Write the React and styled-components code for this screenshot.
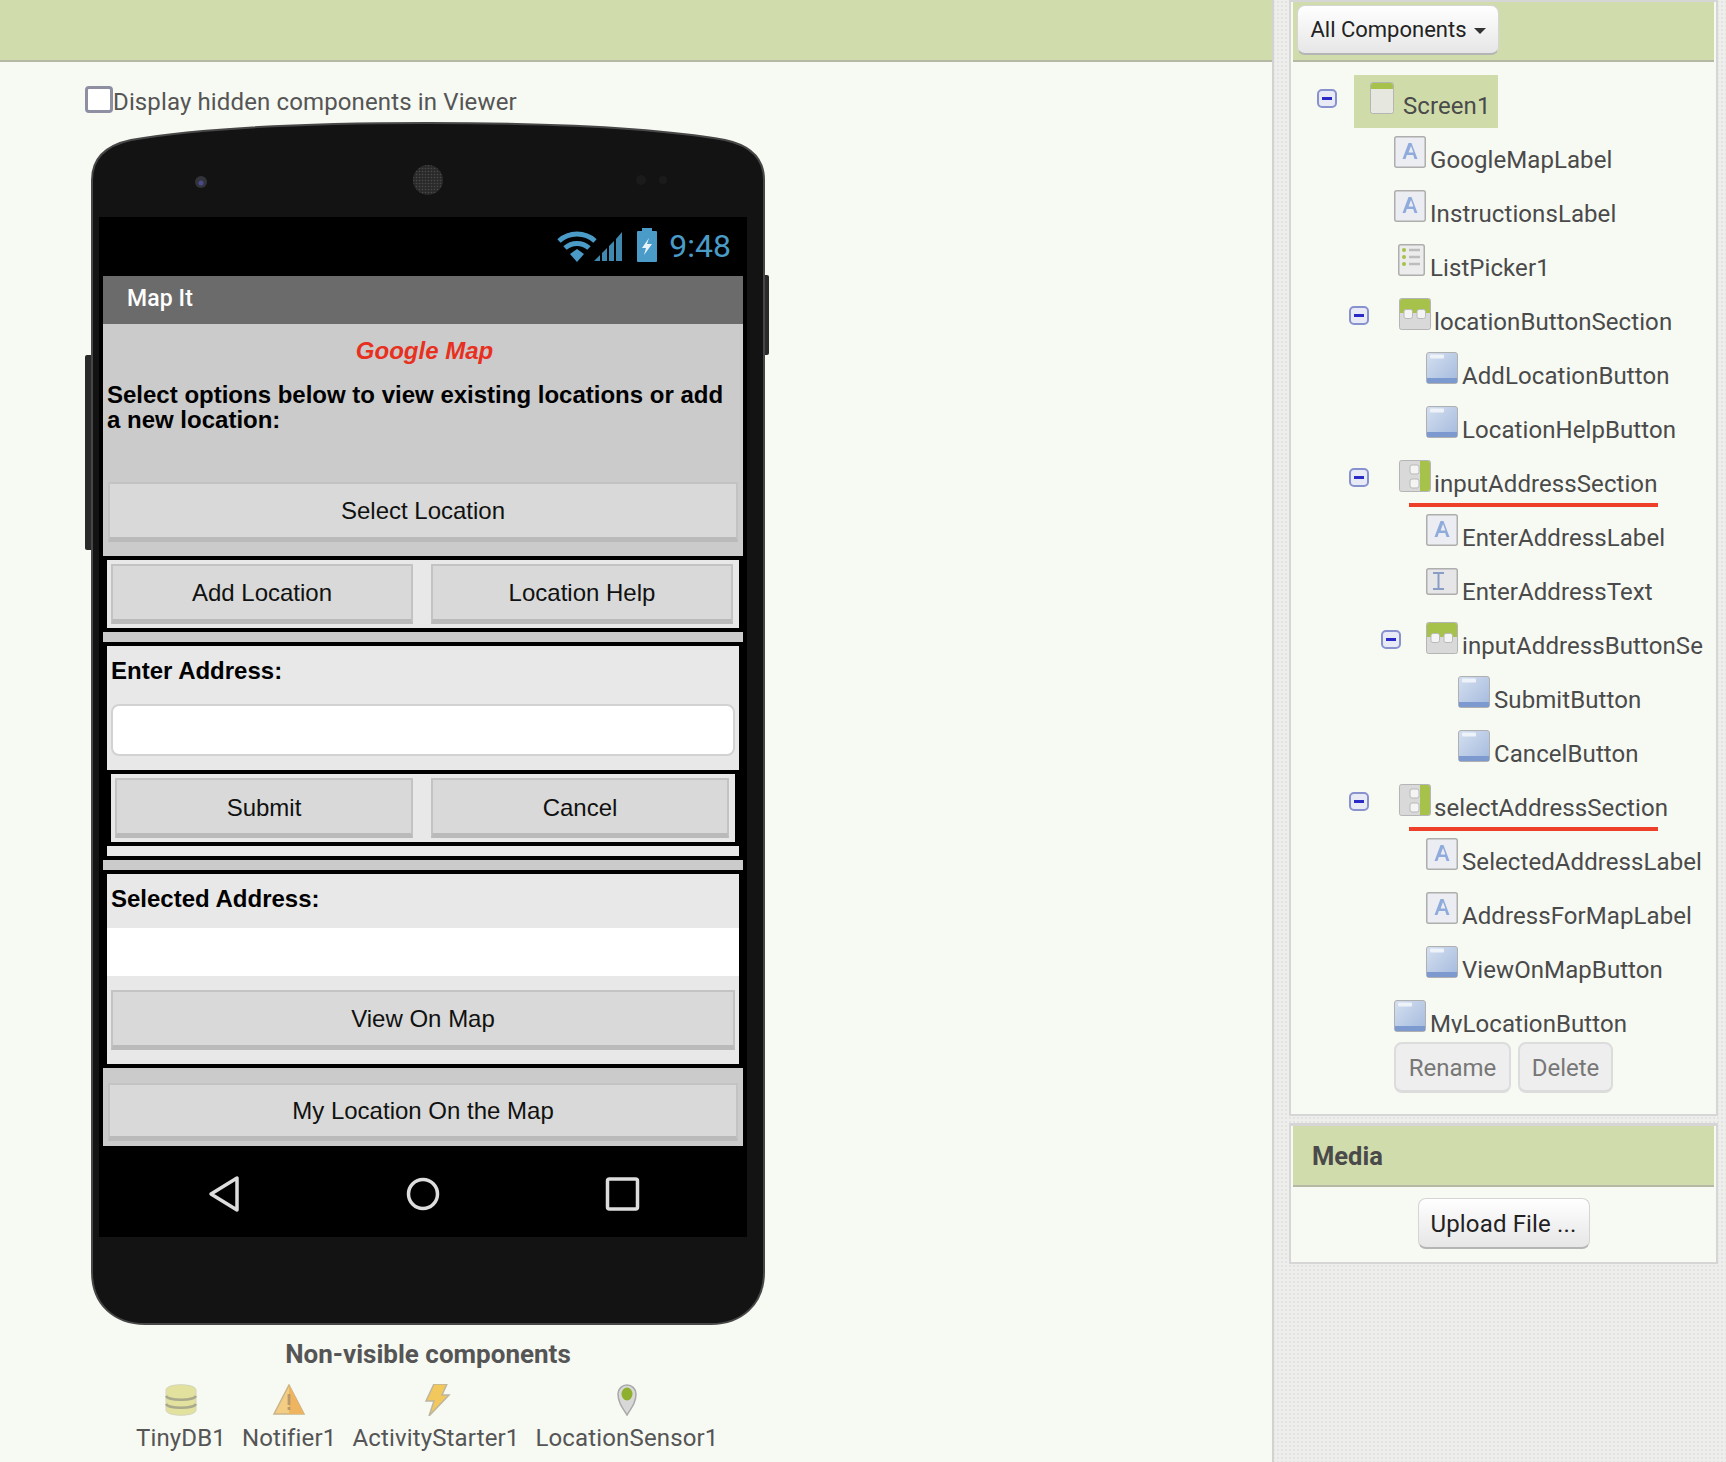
import React from "react";
import styled, { createGlobalStyle } from "styled-components";

const GlobalStyle = createGlobalStyle`
  html, body {
    margin: 0;
    padding: 0;
  }
  body {
    font-family: Roboto, "Liberation Sans", sans-serif;
    background-color: #eeeeed;
    background-image: radial-gradient(#e3e3e2 1px, transparent 1px);
    background-size: 4px 4px;
  }
`;

const PHONE_FONT = `"Liberation Sans", Arial, sans-serif`;

const Page = styled.div`
  display: flex;
  width: 1726px;
  height: 1462px;
  overflow: hidden;
`;

const Viewer = styled.div`
  width: 1272px;
  flex: none;
  background: #f7f9f3;
`;

const GreenBar = styled.div`
  height: 60px;
  background: #d1dcac;
  border-bottom: 2px solid #b4b8a4;
`;

const ViewerBody = styled.div`
  padding: 24px 0 0 85px;
`;

const HiddenToggle = styled.label`
  display: flex;
  align-items: flex-start;
  height: 27px;
  font-size: 24px;
  line-height: 27px;
  letter-spacing: 0.13px;
  color: #555;
`;

const HiddenText = styled.span`
  margin-top: 3px;
`;

const CheckBox = styled.span`
  box-sizing: border-box;
  width: 28px;
  height: 27px;
  background: #fff;
  border: 3px solid #8e8fa3;
  border-radius: 4px;
`;

const Phone = styled.div`
  position: relative;
  box-sizing: border-box;
  width: 674px;
  height: 1201px;
  margin: 9px 0 0 6px;
  padding: 95px 8px 0 10px;
`;

const PhoneShell = styled.svg`
  position: absolute;
  left: -6px;
  top: 0;
  width: 686px;
  height: 1203px;
`;

const Screen = styled.div`
  position: relative;
  width: 648px;
  height: 1020px;
  margin-left: -2px;
  background: #000;
  display: flex;
  flex-direction: column;
  font-family: ${PHONE_FONT};
`;

const StatusBar = styled.div`
  height: 59px;
  flex: none;
  position: relative;
`;

const StatusIcons = styled.svg`
  position: absolute;
  left: 458px;
  top: 11px;
  width: 102px;
  height: 36px;
`;

const Clock = styled.span`
  position: absolute;
  right: 16px;
  top: 10px;
  font-family: Roboto, sans-serif;
  font-weight: 400;
  font-size: 32px;
  line-height: 38px;
  color: #4a9bc7;
`;

const AppArea = styled.div`
  display: flex;
  flex-direction: column;
  gap: 4px;
  margin: 0 4px;
`;

const AppBar = styled.div`
  height: 48px;
  margin-bottom: -4px;
  background: #6b6b6b;
  color: #fff;
  font-family: Roboto, sans-serif;
  font-weight: 500;
  font-size: 23px;
  line-height: 46px;
  letter-spacing: 0.1px;
  padding-left: 24px;
`;

const Intro = styled.div`
  height: 232px;
  box-sizing: border-box;
  background: #cbcbcb;
  padding: 13px 5px 0;
`;

const AppTitle = styled.div`
  text-align: center;
  font-weight: 700;
  font-style: italic;
  font-size: 24px;
  line-height: 28px;
  padding-left: 3px;
  color: #e8301f;
`;

const Instructions = styled.p`
  margin: 17px 0 50px -1px;
  font-weight: 700;
  font-size: 24px;
  line-height: 25px;
  color: #000;
`;

const AppButton = styled.div`
  box-sizing: border-box;
  flex: ${(p) => (p.$grow ? "1" : "none")};
  height: ${(p) => p.$height || 60}px;
  display: flex;
  align-items: center;
  justify-content: center;
  background: #d8d9d8;
  border: 2px solid #c3c3c3;
  border-bottom: 5px solid #bababa;
  color: #111;
  font-size: 24px;
  padding-top: ${(p) => (p.$lift ? 0 : 2)}px;
`;

const SplitRow = styled.div`
  display: flex;
  gap: 18px;
  height: 68px;
  box-sizing: border-box;
  margin: 0 ${(p) => p.$inset}px;
  padding: 4px ${(p) => p.$pad}px 4px 4px;
  background: #e8e8e8;
`;

const Strip = styled.div`
  height: 10px;
  margin: 0 ${(p) => p.$inset || 0}px;
  background: ${(p) => p.$color};
`;

const Panel = styled.div`
  margin: 0 4px;
  background: #e8e8e8;
  display: flex;
  flex-direction: column;
`;

const FieldLabel = styled.div`
  font-weight: 700;
  font-size: 24px;
  line-height: 28px;
  color: #000;
  padding: ${(p) => p.$top}px 0 0 4px;
  height: ${(p) => p.$height}px;
  box-sizing: border-box;
`;

const AddressInput = styled.div`
  box-sizing: border-box;
  height: 52px;
  margin: 0 4px 14px 4px;
  background: #fff;
  border: 2px solid #d2d2d2;
  border-radius: 8px;
`;

const AddressValue = styled.div`
  height: 48px;
  background: #fff;
`;

const PanelButtonWrap = styled.div`
  padding: 14px 4px;
  display: flex;
  flex-direction: column;
`;

const LastSection = styled.div`
  height: 78px;
  box-sizing: border-box;
  background: #cbcbcb;
  padding: 15px 5px 0;
`;

const NavBar = styled.div`
  height: 91px;
  display: flex;
  align-items: center;
  justify-content: center;
  padding-top: 5px;
  box-sizing: border-box;
`;

const NavIcons = styled.svg`
  width: 648px;
  height: 48px;
`;

const NonVisible = styled.div`
  width: 674px;
  margin-left: 6px;
`;

const NonVisibleTitle = styled.div`
  margin-top: 15px;
  text-align: center;
  font-weight: 700;
  font-size: 26px;
  line-height: 32px;
  color: #555;
`;

const NonVisibleRow = styled.div`
  display: flex;
  gap: 16px;
  margin: 14px 0 0 45px;
`;

const NonVisibleItem = styled.div`
  display: flex;
  flex-direction: column;
  align-items: center;
  font-size: 24px;
  line-height: 28px;
  letter-spacing: 0.15px;
  color: #555;
  svg {
    width: 36px;
    height: 32px;
    margin-bottom: 8px;
  }
`;

const Gutter = styled.div`
  width: 17px;
  flex: none;
  box-sizing: border-box;
  border-left: 2px solid #d2d2d2;
`;

const Side = styled.div`
  width: 429px;
  flex: none;
  display: flex;
  flex-direction: column;
`;

const SideBox = styled.div`
  box-sizing: border-box;
  height: ${(p) => p.$height}px;
  background: #f7f9f3;
  border: 2px solid #d6d6d6;
  border-top-width: ${(p) => p.$topBorder}px;
`;

const SideHeader = styled.div`
  height: 55px;
  margin: 0 2px;
  padding: 3px 0 0 4px;
  background: #d1dcac;
  border-bottom: 2px solid #b4b8a4;
`;

const RaisedButton = styled.div`
  display: inline-flex;
  align-items: center;
  justify-content: center;
  box-sizing: border-box;
  width: ${(p) => p.$width}px;
  height: ${(p) => p.$height}px;
  padding-top: ${(p) => p.$nudge || 0}px;
  background: linear-gradient(#fff, #e6e6e6);
  border: 1px solid #d5d5d5;
  border-bottom: 2px solid #b5b5b5;
  border-radius: 8px;
  color: #222;
  font-size: ${(p) => p.$size}px;
  letter-spacing: ${(p) => p.$spacing || 0}px;
  gap: 7px;
`;

const Caret = styled.span`
  width: 0;
  height: 0;
  margin-top: 2px;
  border-left: 6.5px solid transparent;
  border-right: 6.5px solid transparent;
  border-top: 6.5px solid #333;
`;

const TreeBody = styled.div`
  padding-top: 13px;
`;

const TreeClip = styled.div`
  height: 958px;
  overflow: hidden;
`;

const ScreenRow = styled.div`
  display: flex;
  align-items: flex-start;
  height: 61px;
  padding-left: 26px;
`;

const ScreenChip = styled.div`
  display: flex;
  align-items: flex-start;
  width: 144px;
  height: 53px;
  margin-left: 17px;
  padding: 7px 0 0 16px;
  box-sizing: border-box;
  background: #cfdcaa;
`;

const TreeRow = styled.div`
  position: relative;
  display: flex;
  align-items: flex-start;
  height: 54px;
  padding-left: ${(p) => p.$indent}px;
`;

const Toggle = styled.span`
  box-sizing: border-box;
  flex: none;
  width: 20px;
  height: 19px;
  margin: ${(p) => p.$top ?? 8}px ${(p) => p.$after}px 0 0;
  border: 2px solid #8892cf;
  border-radius: 5px;
  background: #e8eaf5;
  display: flex;
  align-items: center;
  justify-content: center;
  &::after {
    content: "";
    width: 10px;
    height: 3px;
    background: #2a2ac8;
  }
`;

const NodeIcon = styled.svg`
  flex: none;
  width: 32px;
  height: 32px;
`;

const NodeName = styled.span`
  margin: 10px 0 0 ${(p) => p.$gap ?? 4}px;
  font-size: 24px;
  line-height: 28px;
  letter-spacing: 0.08px;
  white-space: nowrap;
  color: #4a4a4a;
`;

const RedMark = styled.span`
  position: absolute;
  left: 118px;
  top: 43px;
  width: 249px;
  height: 4px;
  background: #ee4028;
`;

const TreeActions = styled.div`
  display: flex;
  gap: 7px;
  margin: 9px 0 0 103px;
`;

const ActionButton = styled.div`
  box-sizing: border-box;
  width: ${(p) => p.$width}px;
  height: 51px;
  display: flex;
  align-items: center;
  justify-content: center;
  padding-top: 1px;
  background: #eee;
  border: 2px solid #dcdcdc;
  border-bottom-width: 3px;
  border-radius: 8px;
  color: #777;
  font-size: 24px;
`;

const Spacer = styled.div`
  height: 7px;
  flex: none;
`;

const MediaHeader = styled.div`
  height: 59px;
  margin: 0 2px;
  background: #d1dcac;
  border-bottom: 2px solid #b4b8a4;
  padding-left: 19px;
  font-weight: 700;
  font-size: 25.5px;
  line-height: 60px;
  color: #4a4a4a;
`;

const MediaBody = styled.div`
  display: flex;
  justify-content: center;
  padding-top: 11px;
`;

const LabelIcon = () => (
  <NodeIcon viewBox="0 0 32 32">
    <rect x="0.75" y="0.75" width="30.5" height="30.5" rx="2" fill="#ecedf2" stroke="#aeaeae" strokeWidth="1.5" />
    <path d="M8.5 23L14.5 7h3l6 16h-3l-1.3-4h-6.4l-1.3 4zM14.6 16.4h4.8L17 10z" fill="#8fabdc" />
  </NodeIcon>
);

const ButtonIcon = () => (
  <NodeIcon viewBox="0 0 32 32">
    <defs>
      <linearGradient id="btnFill" x1="0" y1="0" x2="1" y2="1">
        <stop offset="0" stopColor="#d5e0f0" />
        <stop offset="1" stopColor="#a3b9dd" />
      </linearGradient>
    </defs>
    <rect x="0.5" y="0.5" width="31" height="31" rx="2.5" fill="url(#btnFill)" stroke="#b0b0b0" />
    <rect x="1" y="26" width="30" height="5" fill="#7d9ad0" />
    <rect x="4" y="2.5" width="14" height="4" rx="1" fill="#eef2f9" />
  </NodeIcon>
);

const TextBoxIcon = () => (
  <NodeIcon viewBox="0 0 32 27" style={{ height: 27 }}>
    <rect x="0.75" y="0.75" width="30.5" height="25.5" rx="2" fill="#e6e6e8" stroke="#aeaeae" strokeWidth="1.5" />
    <path d="M7 5h11M7 21h11M12.5 5v16" stroke="#8a9dc4" strokeWidth="2" fill="none" />
  </NodeIcon>
);

const ListIcon = () => (
  <NodeIcon viewBox="0 0 27 32" style={{ width: 27, marginRight: 1, marginLeft: 4 }}>
    <rect x="0.75" y="0.75" width="25.5" height="30.5" rx="2" fill="#ececec" stroke="#aeaeae" strokeWidth="1.5" />
    <circle cx="6" cy="6" r="2" fill="#a6c24a" />
    <circle cx="6" cy="13" r="2" fill="#a6c24a" />
    <circle cx="6" cy="20" r="2" fill="#a6c24a" />
    <path d="M11 6h11M11 13h11M11 20h11" stroke="#bdbdbd" strokeWidth="2.5" />
  </NodeIcon>
);

const HArrangementIcon = () => (
  <NodeIcon viewBox="0 0 32 32">
    <rect x="0.5" y="0.5" width="31" height="31" rx="2" fill="#d9d9d9" stroke="#b5b5b5" />
    <path d="M1 3a2 2 0 0 1 2-2h26a2 2 0 0 1 2 2v12H1z" fill="#a6c24a" />
    <rect x="5" y="11.5" width="8.5" height="9" rx="2" fill="#f4f4f4" stroke="#b9b9b9" />
    <rect x="18" y="11.5" width="8.5" height="9" rx="2" fill="#f4f4f4" stroke="#b9b9b9" />
  </NodeIcon>
);

const VArrangementIcon = () => (
  <NodeIcon viewBox="0 0 32 32">
    <rect x="0.5" y="0.5" width="31" height="31" rx="2" fill="#d9d9d9" stroke="#b5b5b5" />
    <path d="M21 1h8a2 2 0 0 1 2 2v26a2 2 0 0 1-2 2h-8z" fill="#a6c24a" />
    <rect x="11" y="5" width="9" height="9" rx="2" fill="#f4f4f4" stroke="#b9b9b9" />
    <rect x="11" y="19" width="9" height="9" rx="2" fill="#f4f4f4" stroke="#b9b9b9" />
  </NodeIcon>
);

const ScreenIcon = () => (
  <NodeIcon viewBox="0 0 24 32" style={{ width: 24 }}>
    <rect x="0.5" y="0.5" width="23" height="31" rx="2" fill="#e6e7df" stroke="#b5b5b5" />
    <path d="M1 3a2 2 0 0 1 2-2h18a2 2 0 0 1 2 2v4H1z" fill="#a6c24a" />
  </NodeIcon>
);

const DbIcon = () => (
  <svg viewBox="0 0 36 32">
    <path d="M3 6c0-7 30-7 30 0v20c0 7-30 7-30 0z" fill="#e2e29e" stroke="#d4d4bc" />
    <path d="M3 12c3 5 27 5 30 0M3 20c3 5 27 5 30 0" stroke="#a9a98c" strokeWidth="2.5" fill="none" />
  </svg>
);

const WarnIcon = () => (
  <svg viewBox="0 0 36 32">
    <path d="M18 1L33 30H3z" fill="#f4cd84" stroke="#c9b48a" strokeWidth="1.5" />
    <path d="M18 1L33 30H18z" fill="#eeb45f" />
    <rect x="16.6" y="10" width="2.8" height="11" fill="#b89a6a" />
    <rect x="16.6" y="23" width="2.8" height="3" fill="#b89a6a" />
  </svg>
);

const BoltIcon = () => (
  <svg viewBox="0 0 36 32">
    <path d="M16 0h13l-5 11h7L11 32l5-15H8z" fill="#f2c75c" stroke="#bdb59f" strokeWidth="1.5" />
  </svg>
);

const PinIcon = () => (
  <svg viewBox="0 0 36 32">
    <path d="M18 31C13 23 9 18 9 10a9 9 0 0 1 18 0c0 8-4 13-9 21z" fill="#d8d8d8" stroke="#a9a9a9" strokeWidth="1.5" />
    <ellipse cx="18" cy="10" rx="5.5" ry="6.5" fill="#8fb02f" />
  </svg>
);

const treeRows = [
  { name: "GoogleMapLabel", icon: LabelIcon, indent: 103 },
  { name: "InstructionsLabel", icon: LabelIcon, indent: 103 },
  { name: "ListPicker1", icon: ListIcon, indent: 103 },
  { name: "locationButtonSection", icon: HArrangementIcon, indent: 58, after: 30, gap: 3 },
  { name: "AddLocationButton", icon: ButtonIcon, indent: 135 },
  { name: "LocationHelpButton", icon: ButtonIcon, indent: 135 },
  { name: "inputAddressSection", icon: VArrangementIcon, indent: 58, after: 30, gap: 3, marked: true },
  { name: "EnterAddressLabel", icon: LabelIcon, indent: 135 },
  { name: "EnterAddressText", icon: TextBoxIcon, indent: 135 },
  { name: "inputAddressButtonSe", icon: HArrangementIcon, indent: 90, after: 25 },
  { name: "SubmitButton", icon: ButtonIcon, indent: 167 },
  { name: "CancelButton", icon: ButtonIcon, indent: 167 },
  { name: "selectAddressSection", icon: VArrangementIcon, indent: 58, after: 30, gap: 3, marked: true },
  { name: "SelectedAddressLabel", icon: LabelIcon, indent: 135 },
  { name: "AddressForMapLabel", icon: LabelIcon, indent: 135 },
  { name: "ViewOnMapButton", icon: ButtonIcon, indent: 135 },
  { name: "MyLocationButton", icon: ButtonIcon, indent: 103 },
];

const nonVisible = [
  { name: "TinyDB1", icon: DbIcon },
  { name: "Notifier1", icon: WarnIcon },
  { name: "ActivityStarter1", icon: BoltIcon },
  { name: "LocationSensor1", icon: PinIcon },
];

export default function App() {
  return (
    <>
      <GlobalStyle />
      <Page>
        <Viewer>
          <GreenBar />
          <ViewerBody>
            <HiddenToggle>
              <CheckBox />
              <HiddenText>Display hidden components in Viewer</HiddenText>
            </HiddenToggle>
            <Phone>
              <PhoneShell viewBox="-6 0 686 1203">
                <defs>
                  <pattern id="speakerDots" width="3" height="3" patternUnits="userSpaceOnUse">
                    <rect width="3" height="3" fill="#2a2a2a" />
                    <circle cx="1.5" cy="1.5" r="0.8" fill="#4a4a4a" />
                  </pattern>
                </defs>
                <rect x="-6" y="233" width="10" height="195" rx="2" fill="#2a2a2a" />
                <rect x="670" y="153" width="8" height="80" rx="2" fill="#2a2a2a" />
                <path
                  d="M1 58C1 38 12 24 40 18C120 4 240 1 337 1C434 1 554 4 634 18C662 24 673 38 673 58V1150C673 1183 650 1202 620 1202H54C24 1202 1 1183 1 1150Z"
                  fill="#131313"
                  stroke="#474747"
                  strokeWidth="2"
                />
                <circle cx="110" cy="60" r="6" fill="#33333a" />
                <circle cx="110" cy="61" r="2.5" fill="#4a4a8c" />
                <circle cx="337" cy="58" r="15" fill="url(#speakerDots)" />
                <circle cx="550" cy="58" r="5" fill="#1b1b1b" />
                <circle cx="572" cy="58" r="4" fill="#1b1b1b" />
              </PhoneShell>
              <Screen>
                <StatusBar>
                  <StatusIcons viewBox="0 0 102 36">
                    <path d="M2 13A27 27 0 0 1 38 13" stroke="#4a9bc7" strokeWidth="5" fill="none" />
                    <path d="M8 20A18 18 0 0 1 32 20" stroke="#4a9bc7" strokeWidth="5" fill="none" />
                    <path d="M13 26L20 21L27 26L20 34Z" fill="#4a9bc7" />
                    <path d="M37 33L43 27V33ZM45 33V25L50 20V33ZM52 33V18L57 13V33ZM59 33V11L65 4V33Z" fill="#3f88af" />
                    <rect x="80" y="3" width="20" height="31" rx="1" fill="#4a9bc7" />
                    <rect x="85" y="0" width="10" height="4" fill="#4a9bc7" />
                    <path d="M92 10L85 20H89L87 27L95 16H90Z" fill="#e8f4fa" />
                  </StatusIcons>
                  <Clock>9:48</Clock>
                </StatusBar>
                <AppArea>
                  <AppBar>Map It</AppBar>
                  <Intro>
                    <AppTitle>Google Map</AppTitle>
                    <Instructions>
                      Select options below to view existing locations or add a new location:
                    </Instructions>
                    <AppButton $height={60} $lift>Select Location</AppButton>
                  </Intro>
                  <SplitRow $inset={4} $pad={6}>
                    <AppButton $grow $lift>Add Location</AppButton>
                    <AppButton $grow $lift>Location Help</AppButton>
                  </SplitRow>
                  <Strip $color="#cbcbcb" />
                  <Panel>
                    <FieldLabel $top={11} $height={58}>Enter Address:</FieldLabel>
                    <AddressInput />
                  </Panel>
                  <SplitRow $inset={8} $pad={6}>
                    <AppButton $grow>Submit</AppButton>
                    <AppButton $grow>Cancel</AppButton>
                  </SplitRow>
                  <Strip $color="#e8e8e8" $inset={4} />
                  <Strip $color="#cbcbcb" />
                  <Panel>
                    <FieldLabel $top={11} $height={54}>Selected Address:</FieldLabel>
                    <AddressValue />
                    <PanelButtonWrap>
                      <AppButton $lift>View On Map</AppButton>
                    </PanelButtonWrap>
                  </Panel>
                  <LastSection>
                    <AppButton $height={58} $lift>My Location On the Map</AppButton>
                  </LastSection>
                </AppArea>
                <NavBar>
                  <NavIcons viewBox="0 0 648 48">
                    <path d="M138 8V40L112 24Z" fill="none" stroke="#ddd" strokeWidth="3.5" strokeLinejoin="round" />
                    <circle cx="324" cy="24" r="14.5" fill="none" stroke="#ddd" strokeWidth="3.5" />
                    <rect x="508.5" y="9" width="30" height="30" rx="2" fill="none" stroke="#ddd" strokeWidth="3.5" />
                  </NavIcons>
                </NavBar>
              </Screen>
            </Phone>
            <NonVisible>
              <NonVisibleTitle>Non-visible components</NonVisibleTitle>
              <NonVisibleRow>
                {nonVisible.map(({ name, icon: Icon }) => (
                  <NonVisibleItem key={name}>
                    <Icon />
                    {name}
                  </NonVisibleItem>
                ))}
              </NonVisibleRow>
            </NonVisible>
          </ViewerBody>
        </Viewer>
        <Gutter />
        <Side>
          <SideBox $height={1116} $topBorder={2}>
            <SideHeader>
              <RaisedButton $width={202} $height={50} $size={22}>
                All Components <Caret />
              </RaisedButton>
            </SideHeader>
            <TreeBody>
              <TreeClip>
                <ScreenRow>
                  <Toggle $top={14} $after={0} />
                  <ScreenChip>
                    <ScreenIcon />
                    <NodeName $gap={9}>Screen1</NodeName>
                  </ScreenChip>
                </ScreenRow>
                {treeRows.map(({ name, icon: Icon, indent, after, gap, marked }) => (
                  <TreeRow key={name} $indent={indent}>
                    {after ? <Toggle $after={after} /> : null}
                    <Icon />
                    <NodeName $gap={gap}>{name}</NodeName>
                    {marked ? <RedMark /> : null}
                  </TreeRow>
                ))}
              </TreeClip>
              <TreeActions>
                <ActionButton $width={117}>Rename</ActionButton>
                <ActionButton $width={95}>Delete</ActionButton>
              </TreeActions>
            </TreeBody>
          </SideBox>
          <Spacer />
          <SideBox $height={141} $topBorder={3}>
            <MediaHeader>Media</MediaHeader>
            <MediaBody>
              <RaisedButton $width={172} $height={51} $size={24} $nudge={2} $spacing={0.15}>Upload File ...</RaisedButton>
            </MediaBody>
          </SideBox>
        </Side>
      </Page>
    </>
  );
}
